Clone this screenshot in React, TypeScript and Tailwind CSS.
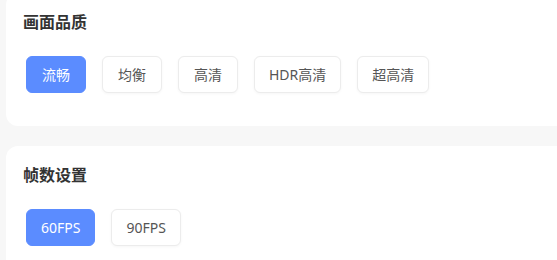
import React, { useState } from 'react';

const QUALITY = ['流畅', '均衡', '高清', 'HDR高清', '超高清'];
const FPS = ['60FPS', '90FPS'];

const OptionGroup: React.FC<{ title: string; options: string[]; value: string; onChange: (v: string) => void }> = ({ title, options, value, onChange }) => (
  <section className="bg-white rounded-[12px] pt-[17px] pb-[33px] pl-[17px] pr-5">
    <h3 className="text-[16px] leading-[24px] font-bold text-[#333333]">{title}</h3>
    <div className="flex gap-[16px] mt-[22px] ml-[3px]">
      {options.map((o) => (
        <button
          key={o}
          onClick={() => onChange(o)}
          className={`h-[37px] min-w-[60px] px-[14px] rounded-[6px] text-[14px] leading-none border ${
            value === o
              ? 'bg-[#5b8cff] border-[#5b8cff] text-white'
              : 'bg-white border-[#ececec] text-[#555555] shadow-[0_1px_3px_rgba(0,0,0,0.04)]'
          }`}
        >
          {o}
        </button>
      ))}
    </div>
  </section>
);

const App: React.FC = () => {
  const [quality, setQuality] = useState('流畅');
  const [fps, setFps] = useState('60FPS');

  return (
    <div
      className="w-[557px] h-[260px] overflow-hidden bg-[#f7f7f7]"
      style={{ fontFamily: '"Noto Sans", "Noto Sans CJK SC", sans-serif' }}
    >
      <div className="-mt-[7px] ml-[6px] -mr-[12px] flex flex-col gap-[20px]">
        <OptionGroup title="画面品质" options={QUALITY} value={quality} onChange={setQuality} />
        <OptionGroup title="帧数设置" options={FPS} value={fps} onChange={setFps} />
      </div>
    </div>
  );
};

export default App;
